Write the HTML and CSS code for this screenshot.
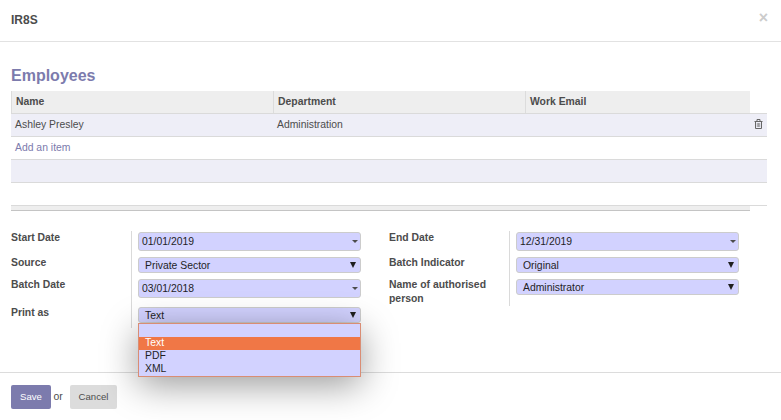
FILE: index.html
```html
<!DOCTYPE html>
<html lang="en">
<head>
<meta charset="utf-8">
<title>IR8S</title>
<link rel="stylesheet" href="styles.css">
</head>
<body>
<div class="modal">
  <header class="modal-header">
    <h1 class="modal-title">IR8S</h1>
    <span class="close">×</span>
  </header>
  <main class="modal-body">
    <h2 class="section-title">Employees</h2>
    <div class="list">
      <div class="list-head">
        <span class="th">Name</span><span class="th">Department</span><span class="th">Work Email</span>
      </div>
      <div class="row odd">
        <span class="td">Ashley Presley</span><span class="td">Administration</span><span class="td"></span>
        <svg class="trash" viewBox="0 0 9 10" width="9" height="10" fill="none" stroke="#666">
          <path d="M.5 2.5H8.5M3 2V.5H6V2M1.5 2.5V9.5H7.5V2.5"/>
          <path d="M3.3 4V8M4.5 4V8M5.7 4V8" stroke-width=".6"/>
        </svg>
      </div>
      <div class="row"><a class="td add">Add an item</a></div>
      <div class="row odd"></div>
      <div class="row"></div>
      <div class="list-foot"></div>
    </div>
    <div class="groups">
      <div class="group left">
        <div class="labels"><label>Start Date</label><label>Source</label><label>Batch Date</label><label>Print as</label></div>
        <div class="fields">
          <div class="cell"><div class="date">01/01/2019<i class="caret"></i></div></div>
          <div class="cell"><div class="select">Private Sector<i class="arrow"></i></div></div>
          <div class="cell"><div class="date">03/01/2018<i class="caret"></i></div></div>
          <div class="cell"><div class="select">Text<i class="arrow"></i>
            <div class="options">
              <div class="option"></div>
              <div class="option active">Text</div>
              <div class="option">PDF</div>
              <div class="option">XML</div>
            </div>
          </div></div>
        </div>
      </div>
      <div class="group right">
        <div class="labels"><label>End Date</label><label>Batch Indicator</label><label>Name of authorised person</label></div>
        <div class="fields">
          <div class="cell"><div class="date">12/31/2019<i class="caret"></i></div></div>
          <div class="cell"><div class="select">Original<i class="arrow"></i></div></div>
          <div class="cell"><div class="select">Administrator<i class="arrow"></i></div></div>
        </div>
      </div>
    </div>
  </main>
  <footer class="modal-footer">
    <span class="btn primary">Save</span><span class="or">or</span><span class="btn">Cancel</span>
  </footer>
</div>
</body>
</html>
```
FILE: styles.css
```css
* { box-sizing: border-box; }
body {
  margin: 0;
  background: #fff;
  color: #4c4c4c;
  font: 10.4px/14px "Liberation Sans", Arial, sans-serif;
  overflow: hidden;
}
.modal { height: 420px; display: flex; flex-direction: column; }

.modal-header {
  height: 42px;
  display: flex;
  justify-content: space-between;
  padding: 0 13px 0 11px;
  border-bottom: 1px solid #e2e2e2;
}
.modal-title { margin: 0; font-size: 12px; line-height: 40px; }
.close { font-size: 16px; font-weight: bold; line-height: 35px; color: #ccc; }

.modal-body { height: 330px; padding: 24px 14px 0 11px; }
.section-title { margin: 0; height: 25px; font-size: 16px; line-height: 20px; color: #7c7bad; }

.list-head {
  display: grid;
  grid-template-columns: 262px 252px 225px;
  width: 739px;
  height: 22px;
  background: #eee;
  font-weight: bold;
}
.th { padding: 4px 4px 3px; border-left: 1px solid #dcdcdc; }
.row {
  display: grid;
  grid-template-columns: 262px 252px 1fr 14px;
  height: 23px;
  border-top: 1px solid #dadada;
}
.odd { background: #eeeef7; }
.td { padding: 4px; }
.add { color: #7c7bad; }
.trash { margin: 5px 0 0 1px; }
.list-foot {
  width: 739px;
  height: 5px;
  background: #eee;
  border-bottom: 1px solid #c4c4c4;
  margin-top: 1px;
}
.row:nth-last-child(2) { height: 24px; border-bottom: 1px solid #dadada; margin-bottom: -1px; }

.groups { display: flex; gap: 28px; margin-top: 20px; align-items: flex-start; }
.group { display: grid; grid-template-columns: 120px 230px; }
.labels, .fields { display: grid; }
.left .labels, .left .fields { grid-template-rows: 25px 22px 28px 22px; }
.right .labels, .right .fields { grid-template-rows: 25px 22px 28px; }
.labels { font-weight: bold; }
.fields { border-left: 1px solid #dadada; padding-left: 6px; }
.cell { padding-top: 1px; }
.date, .select {
  position: relative;
  display: flex;
  justify-content: space-between;
  background: #d2d2ff;
  border: 1px solid #ccc;
  border-radius: 3px;
  color: #1f1f1f;
}
.date { height: 19px; padding: 0 2px 0 3px; line-height: 18px; }
.select { height: 16px; padding: 0 4px 0 6px; line-height: 16px; }
.caret { margin-top: 7px; height: 3px; border: 3px solid transparent; border-top-color: #4c4c4c; border-bottom: 0; }
.arrow { margin-top: 4px; height: 6px; border: 3.5px solid transparent; border-top: 6px solid #1f1f1f; border-bottom: 0; }

.options {
  position: absolute;
  top: 15px;
  left: -1px;
  width: 223px;
  height: 54px;
  background: #d2d2ff;
  border: 1px solid #d98d74;
  box-shadow: 0 8px 36px rgba(0, 0, 0, .4);
  z-index: 2;
}
.option { height: 13px; padding-left: 6px; line-height: 11px; }
.active { background: #f07746; color: #fff; }

.modal-footer {
  height: 48px;
  display: flex;
  align-items: flex-start;
  padding: 12px 11px;
  border-top: 1px solid #dcdcdc;
}
.btn {
  width: 47px;
  height: 24px;
  border-radius: 2px;
  background: #dcdcdc;
  font-size: 9.6px;
  line-height: 24px;
  text-align: center;
}
.primary { width: 40px; background: #7c7bad; color: #fff; }
.or { width: 19px; padding-left: 2.5px; line-height: 23px; }
```
